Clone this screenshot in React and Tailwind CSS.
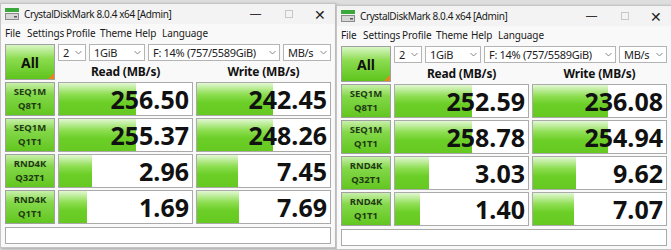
import React from 'react';

const tests = [
    ['SEQ1M', 'Q8T1'],
    ['SEQ1M', 'Q1T1'],
    ['RND4K', 'Q32T1'],
    ['RND4K', 'Q1T1'],
];

const left = [
    { read: '256.50', rw: 77, write: '242.45', ww: 76 },
    { read: '255.37', rw: 77, write: '248.26', ww: 76 },
    { read: '2.96', rw: 33, write: '7.45', ww: 41 },
    { read: '1.69', rw: 28, write: '7.69', ww: 42 },
];

const right = [
    { read: '252.59', rw: 77, write: '236.08', ww: 75 },
    { read: '258.78', rw: 77, write: '254.94', ww: 75 },
    { read: '3.03', rw: 34, write: '9.62', ww: 43 },
    { read: '1.40', rw: 25, write: '7.07', ww: 41 },
];

const menu = [
    ['File', 'w-[22px]'],
    ['Settings', 'w-[39px]'],
    ['Profile', 'w-[34px]'],
    ['Theme', 'w-[35px]'],
    ['Help', 'w-[27px]'],
    ['Language', 'w-[45px]'],
];

function AppIcon() {
    return (
        <svg width="14" height="12" viewBox="0 0 14 12">
            <rect x="0" y="0" width="14" height="4" fill="#3aa83a" />
            <rect x="0" y="5" width="14" height="7" fill="#8a8a8a" />
            <rect x="1" y="6" width="12" height="5" fill="#d6d6d6" />
            <rect x="9" y="8" width="3" height="1.5" fill="#5a5a5a" />
        </svg>
    );
}

function Select({ width, children }) {
    return (
        <div className={`${width} h-[17px] bg-white border border-[#b4b4b4] flex items-center justify-between pl-[4px] pr-[3px] text-[11px] tracking-[-0.3px] leading-none text-[#222] whitespace-nowrap overflow-hidden`}>
            <span>{children}</span>
            <svg width="7" height="5" viewBox="0 0 7 5" className="shrink-0">
                <path d="M0.5 1 L3.5 4 L6.5 1" fill="none" stroke="#888" strokeWidth="1" />
            </svg>
        </div>
    );
}

function Cell({ value, bar }) {
    return (
        <div className="relative h-[34px] bg-white border border-[#aaaaaa] overflow-hidden">
            <div
                className="absolute left-0 top-0 bottom-0 bg-[linear-gradient(to_bottom,#e2f8d2_0%,#8ede52_35%,#6ccf28_60%,#66c922_100%)]"
                style={{ width: bar }}
            />
            <div className="relative h-full flex items-center justify-end pr-[3px] text-[25px] font-bold text-[#111] leading-none">
                {value}
            </div>
        </div>
    );
}

function Window({ data, top }) {
    return (
        <div className={`w-[336px] shrink-0 bg-[#f9f9f9] border border-[#c4c4c4] ${top} h-[245px] shadow-[1px_1px_3px_rgba(0,0,0,0.25)]`}>
            <div className="h-[20px] flex items-center pl-[4px] bg-[#f3f3f3]">
                <AppIcon />
                <span className="ml-[5px] text-[10px] tracking-[-0.4px] text-[#1a1a1a] whitespace-nowrap">CrystalDiskMark 8.0.4 x64 [Admin]</span>
                <div className="ml-auto flex items-center">
                    <span className="w-[33px] text-center text-[12px] text-[#333]">—</span>
                    <span className="w-[33px] flex justify-center">
                        <span className="w-[8px] h-[8px] border border-[#c8c8c8]" />
                    </span>
                    <span className="w-[30px] text-center text-[14px] text-[#222]">✕</span>
                </div>
            </div>
            <div className="h-[18px] flex items-center pl-[4px] text-[10px] tracking-[-0.1px] text-[#1a1a1a] bg-[#f9f9f9] whitespace-nowrap">
                {menu.map(([t, w]) => (
                    <span key={t} className={w}>{t}</span>
                ))}
            </div>
            <div className="px-[4px] pt-[2px]">
                <div className="grid grid-cols-[50px_135px_135px] gap-x-[3px]">
                    <div className="row-span-2 h-[36px] relative border border-[#a0a0a0] bg-[linear-gradient(to_bottom,#d9f6c4_0%,#8cdc50_40%,#5ec41c_100%)] flex items-center justify-center text-[14px] font-bold text-[#111]">
                        All
                        <span className="absolute right-0 bottom-0 w-0 h-0 border-l-[6px] border-l-transparent border-b-[6px] border-b-[#e8841c]" />
                    </div>
                    <div className="col-span-2 flex gap-[3px]">
                        <Select width="w-[28px]">2</Select>
                        <Select width="w-[56px]">1GiB</Select>
                        <Select width="w-[132px]">F: 14% (757/5589GiB)</Select>
                        <Select width="w-[48px]">MB/s</Select>
                    </div>
                    <div className="h-[19px] flex items-center justify-center pt-[2px] text-[12px] tracking-[-0.2px] font-bold text-[#111] leading-none">Read (MB/s)</div>
                    <div className="h-[19px] flex items-center justify-center pt-[2px] text-[12px] tracking-[-0.2px] font-bold text-[#111] leading-none">Write (MB/s)</div>
                </div>
                <div className="mt-[2px] flex flex-col gap-[2px]">
                    {data.map((row, i) => (
                        <div key={i} className="grid grid-cols-[50px_135px_135px] gap-x-[3px]">
                            <div className="h-[34px] border border-[#a0a0a0] bg-[linear-gradient(to_bottom,#c8f0aa_0%,#84d84a_35%,#62c620_100%)] flex flex-col items-center justify-center text-[9.5px] leading-[14px] font-bold text-[#1f3a12]">
                                <span>{tests[i][0]}</span>
                                <span>{tests[i][1]}</span>
                            </div>
                            <Cell value={row.read} bar={row.rw} />
                            <Cell value={row.write} bar={row.ww} />
                        </div>
                    ))}
                </div>
                <div className="mt-[3px] h-[17px] bg-white border border-[#aaaaaa]" />
            </div>
        </div>
    );
}

export default function App() {
    return (
        <div className="w-[671px] h-[250px] overflow-hidden bg-[#dedede] flex font-['Noto_Sans','Open_Sans',sans-serif]">
            <Window data={left} top="mt-[3px]" />
            <Window data={right} top="mt-[5px]" />
        </div>
    );
}
